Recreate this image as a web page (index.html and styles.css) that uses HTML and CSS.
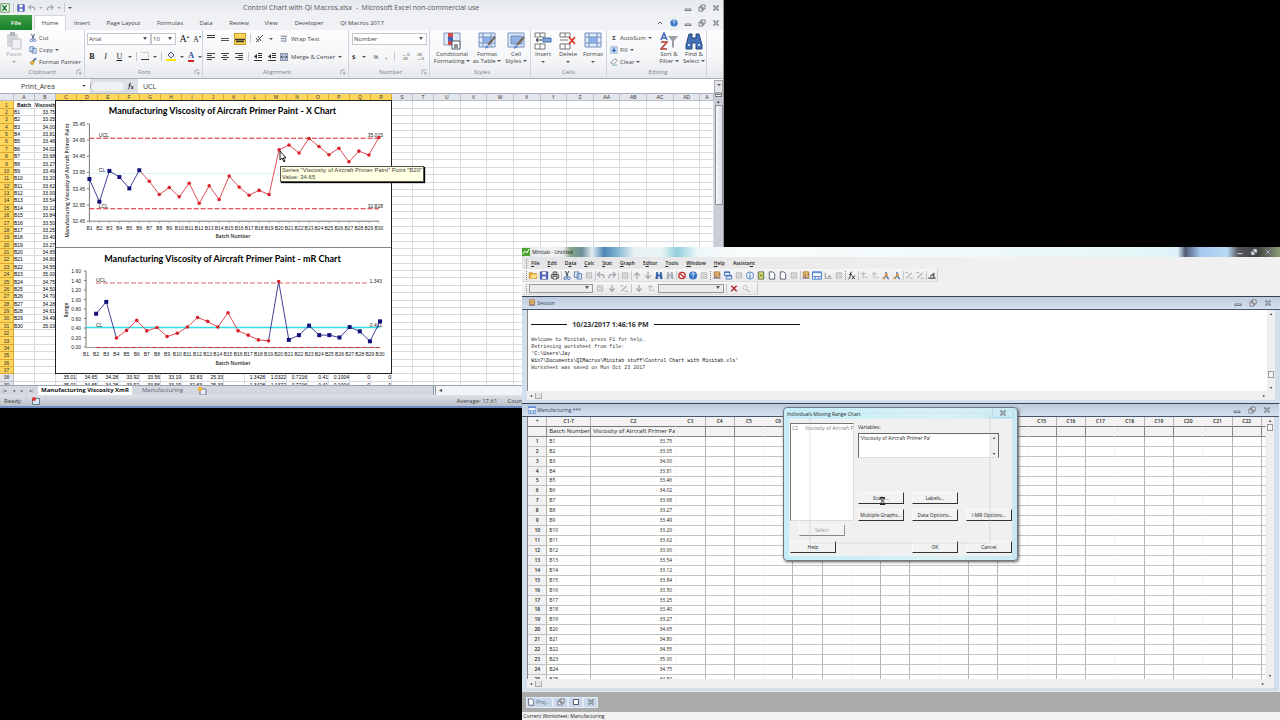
FILE: index.html
```html
<!DOCTYPE html>
<html lang="en">
<head>
<meta charset="utf-8">
<title>Control Chart with QI Macros</title>
<link rel="stylesheet" href="styles.css">
</head>
<body>
<svg class="defs" aria-hidden="true">
  <symbol id="i-excel" viewBox="0 0 12 12"><rect x="1" y="1" width="10" height="10" fill="#fff" stroke="#3c8a3c"/><path d="M3 3l5 6M8 3L3 9" stroke="#217a2b" stroke-width="2"/></symbol>
  <symbol id="i-save" viewBox="0 0 10 10"><path d="M1 1h8v8H1z" fill="#5a6cc8" stroke="#3c4a9a"/><path d="M3 1h4v3H3zM3 6h4v3H3z" fill="#fff"/></symbol>
  <symbol id="i-undo" viewBox="0 0 10 10"><path d="M2 4h4q3 0 2 4M4 1L1 4l3 3" fill="none" stroke="#a4a9b2" stroke-width="1.5"/></symbol>
  <symbol id="i-redo" viewBox="0 0 10 10"><path d="M8 4H4Q1 4 2 8M6 1l3 3-3 3" fill="none" stroke="#a4a9b2" stroke-width="1.5"/></symbol>
  <symbol id="i-cut" viewBox="0 0 10 10"><path d="M3 0l3 6M7 0L4 6" stroke="#456" stroke-width="1.2"/><circle cx="3" cy="8" r="1.5" fill="none" stroke="#3a6cb8"/><circle cx="7" cy="8" r="1.5" fill="none" stroke="#3a6cb8"/></symbol>
  <symbol id="i-copy" viewBox="0 0 10 10"><path d="M1 1h5v6H1zM4 3h5v6H4z" fill="#e8f0fb" stroke="#5579b0"/></symbol>
  <symbol id="i-brush" viewBox="0 0 10 10"><path d="M5 4L9 0" stroke="#46609c" stroke-width="2"/><path d="M1 6l4-3 2 2-3 4z" fill="#e9b63c" stroke="#8d6b18" stroke-width=".6"/></symbol>
  <symbol id="i-paste" viewBox="0 0 16 18"><path d="M1 2h11v13H1z" fill="#d4d6da"/><path d="M4 0h5v4H4z" fill="#b0b3b8"/><path d="M6 7h9v10H6z" fill="#f0f1f3" stroke="#bfc2c8"/></symbol>
  <symbol id="i-top" viewBox="0 0 10 10"><path d="M1 1.500h8M1 3.500h8" stroke="#333"/></symbol>
  <symbol id="i-mid" viewBox="0 0 10 10"><path d="M1 4.500h8M1 6.500h8" stroke="#555"/></symbol>
  <symbol id="i-bot" viewBox="0 0 10 10"><path d="M0 5.500h10M1 7.500h8" stroke="#333" stroke-width="1.300"/></symbol>
  <symbol id="i-left" viewBox="0 0 10 10"><path d="M1 1.500h8M1 3.500h5M1 5.500h8M1 7.500h5" stroke="#444"/></symbol>
  <symbol id="i-center" viewBox="0 0 10 10"><path d="M1 1.500h8M3 3.500h4M1 5.500h8M3 7.500h4" stroke="#444"/></symbol>
  <symbol id="i-right" viewBox="0 0 10 10"><path d="M1 1.500h8M4 3.500h5M1 5.500h8M4 7.500h5" stroke="#444"/></symbol>
  <symbol id="i-indent" viewBox="0 0 10 10"><path d="M5 1.500h4M5 3.500h4M5 5.500h4M1 8.500h8" stroke="#333"/><path d="M4 2v5L1 4.500z" fill="#333"/></symbol>
  <symbol id="i-angle" viewBox="0 0 10 10"><path d="M1 8l7-7M3 2l3 5M1 4l3 4" stroke="#555" fill="none"/></symbol>
  <symbol id="i-wrap" viewBox="0 0 10 10"><path d="M1 1.500h8M1 4.500h5M1 7.500h4" stroke="#555"/><path d="M7 3v5H5" fill="none" stroke="#3a6cb8"/></symbol>
  <symbol id="i-merge" viewBox="0 0 10 10"><path d="M0 1h10v8H0z" fill="#cfdcf0" stroke="#44557a"/><path d="M1 5h8M3 3L1 5l2 2M7 3l2 2-2 2" stroke="#234" fill="none"/></symbol>
  <symbol id="i-table" viewBox="0 0 18 18"><path d="M1 1h16v14H1z" fill="#dfeaf8" stroke="#7290be"/><path d="M5 5h8v6H5z" fill="#8fb1e6"/><path d="M1 5h16M1 11h16M5 1v14M13 1v14" stroke="#7290be"/></symbol>
  <symbol id="i-cond" viewBox="0 0 18 18"><path d="M1 1h16v12H1z" fill="#dfeaf8" stroke="#8b9cba"/><path d="M5 1h5v4H5zM5 9h5v4H5z" fill="#d34a4a"/><path d="M5 5h5v4H5z" fill="#3f66b8"/><path d="M9 9h8v8H9z" fill="#fff" stroke="#456"/><path d="M11 13h4M11 15h4" stroke="#223"/></symbol>
  <symbol id="i-fmt" viewBox="0 0 18 18"><use href="#i-table"/><path d="M10 13l7-8" stroke="#765" stroke-width="2"/><path d="M7 17l1-4 3 2z" fill="#4b80ca"/></symbol>
  <symbol id="i-cell" viewBox="0 0 18 18"><path d="M1 1h16v14H1z" fill="#dfeaf8" stroke="#7290be"/><path d="M4 4h11v8H4z" fill="#8fb1e6" stroke="#7290be"/><path d="M10 13l7-8" stroke="#765" stroke-width="2"/><path d="M7 17l1-4 3 2z" fill="#4b80ca"/></symbol>
  <symbol id="i-ins" viewBox="0 0 18 18"><path d="M1 1h10v4H1zM1 12h10v5H1zM6 1v4M6 12v5" fill="#fff" stroke="#777"/><path d="M9 6h8v4H9z" fill="#7ca6dc" stroke="#456fa8"/><path d="M8 8H2M4 6L2 8l2 2" stroke="#334" fill="none"/></symbol>
  <symbol id="i-del" viewBox="0 0 18 18"><path d="M1 1h10v4H1zM1 12h10v5H1zM6 1v4M6 12v5M1 8h8" fill="#fff" stroke="#777"/><path d="M10 5l6 7M16 5l-6 7" stroke="#d8362a" stroke-width="1.800"/></symbol>
  <symbol id="i-sort" viewBox="0 0 18 18"><path d="M1 8l3-7 3 7M2 6h4" stroke="#3965b1" stroke-width="1.500" fill="none"/><path d="M1 10h6l-6 7h6" fill="none" stroke="#b43a32" stroke-width="1.500"/><path d="M8 4h10l-4 5v7l-2-1V9z" fill="#9a9ea6"/></symbol>
  <symbol id="i-find" viewBox="0 0 18 18"><path d="M4 2h3v4h4V2h3l3 11v4h-6v-6H7v6H1v-4z" fill="#4370b5" stroke="#27497f"/><path d="M3 13h2M13 13h2" stroke="#c7daf4" stroke-width="2"/></symbol>
  <symbol id="i-fill" viewBox="0 0 10 10"><path d="M1 1h8v8H1z" fill="#d7e5f7" stroke="#8ca8cf"/><path d="M5 2v5M3 5l2 2 2-2" stroke="#245fb6" stroke-width="1.500" fill="none"/></symbol>
  <symbol id="i-clear" viewBox="0 0 10 10"><path d="M1 6l5-5 3 2-5 5z" fill="#fff" stroke="#64748d"/><path d="M3 9h6" stroke="#5aa"/></symbol>
  <symbol id="i-help" viewBox="0 0 10 10"><circle cx="5" cy="5" r="4.500" fill="#3474c6"/><path d="M3.500 4q0-2 1.500-2t1.500 1.500Q6.500 4.500 5 5v1M5 7v1" stroke="#fff" fill="none"/></symbol>
  <symbol id="i-min" viewBox="0 0 8 8"><path d="M1 5h6v1.500H1z" fill="#fff" stroke="#565d68" stroke-width=".8"/></symbol>
  <symbol id="i-max" viewBox="0 0 8 8"><path d="M3 1h4v4H3zM1 3h4v4H1z" fill="#fff" stroke="#565d68" stroke-width=".8"/></symbol>
  <symbol id="i-x" viewBox="0 0 8 8"><path d="M1.500 1.500l5 5M6.500 1.500l-5 5" stroke="#565d68" stroke-width="1.600"/><path d="M1.500 1.500l5 5M6.500 1.500l-5 5" stroke="#fff" stroke-width=".5"/></symbol>
  <symbol id="i-open" viewBox="0 0 10 10"><path d="M1 2h3l1 1h4v5H1z" fill="#f1b33c" stroke="#c18a25"/><path d="M2 8l2-4h6L8 8z" fill="#ffdf8a"/></symbol>
  <symbol id="i-print" viewBox="0 0 10 10"><path d="M3 1h4v3H3zM1 4h8v4H1z" fill="#bbb" stroke="#555"/><path d="M3 6h4v3H3z" fill="#fff" stroke="#555"/></symbol>
  <symbol id="i-doc" viewBox="0 0 10 10"><path d="M2 1h4l2 2v6H2z" fill="#fdfdfd" stroke="#4e5a70"/></symbol>
  <symbol id="i-gdoc" viewBox="0 0 10 10"><path d="M2 2h6v6H2z" fill="#e8e8e8" stroke="#b4b4b4"/><path d="M3 4h4M3 6h4" stroke="#c4c4c4"/></symbol>
  <symbol id="i-up" viewBox="0 0 10 10"><path d="M5 9V2M2 5l3-3 3 3" fill="none" stroke="#aaa" stroke-width="1.500"/></symbol>
  <symbol id="i-down" viewBox="0 0 10 10"><path d="M5 1v7M2 5l3 3 3-3" fill="none" stroke="#aaa" stroke-width="1.500"/></symbol>
  <symbol id="i-bino" viewBox="0 0 10 10"><path d="M2 1h2v3h2V1h2l1 8H6V6H4v3H1z" fill="#3b66a9"/></symbol>
  <symbol id="i-gbino" viewBox="0 0 10 10"><path d="M2 1h2v3h2V1h2l1 8H6V6H4v3H1z" fill="#a9b0ba"/></symbol>
  <symbol id="i-no" viewBox="0 0 10 10"><circle cx="5" cy="5" r="3.500" fill="#fff" stroke="#c62f2f" stroke-width="1.500"/><path d="M3 3l4 4" stroke="#c62f2f" stroke-width="1.500"/></symbol>
  <symbol id="i-sess" viewBox="0 0 10 10"><path d="M2 1h6v6H2z" fill="#f2c063" stroke="#a7762b"/><path d="M1 8h8M4 3v5M6 4h3" stroke="#7a6a9a"/></symbol>
  <symbol id="i-wins" viewBox="0 0 10 10"><path d="M1 1h6v4H1zM3 5h6v4H3z" fill="#dfeafb" stroke="#4571bb"/><path d="M1 1.500h6M3 5.500h6" stroke="#2c60b8"/></symbol>
  <symbol id="i-info" viewBox="0 0 10 10"><circle cx="5" cy="5" r="4" fill="#eef5ff" stroke="#467cc2"/><path d="M5 2v1M5 4v4" stroke="#225aa9"/></symbol>
  <symbol id="i-note" viewBox="0 0 10 10"><path d="M2 1h6v8H2z" fill="#f6e36a" stroke="#4b6b52"/><path d="M3 3l4 4M7 3L3 7" stroke="#3c7a4a"/></symbol>
  <symbol id="i-sheet" viewBox="0 0 10 10"><path d="M0 1h10v8H0z" fill="#fff" stroke="#3d77c9"/><path d="M0 2h10M0 6h10M3 6v3M7 6v3" stroke="#3d77c9"/></symbol>
  <symbol id="i-fx" viewBox="0 0 10 10"><path d="M1 9q2 0 2-4t2-4M2 4h3M5 5l3 4M8 5L5 9" stroke="#222" fill="none"/></symbol>
  <symbol id="i-pts" viewBox="0 0 10 10"><path d="M2 3h5M4 1v7M6 7h3" stroke="#b0b0b0"/></symbol>
  <symbol id="i-flag" viewBox="0 0 10 10"><path d="M5 1v4M2 9l3-4 3 4" stroke="#3468b3" fill="none" stroke-width="1.400"/><path d="M4 3h3v3H4zM1 7h3v2H1z" fill="#e29a3c"/></symbol>
  <symbol id="i-line" viewBox="0 0 10 10"><path d="M2 8l6-6M1 2h3M6 8h3" stroke="#aaa" stroke-width="1.200"/></symbol>
  <symbol id="i-axis" viewBox="0 0 10 10"><path d="M2 2v6h7M5 6h3" stroke="#999" fill="none" stroke-width="1.200"/></symbol>
  <symbol id="i-dark" viewBox="0 0 10 10"><path d="M1 8h8M3 6l4-3v4" stroke="#444" fill="none" stroke-width="1.300"/></symbol>
  <symbol id="i-rx" viewBox="0 0 10 10"><path d="M2 2l6 6M8 2L2 8" stroke="#b3202c" stroke-width="1.500"/></symbol>
  <symbol id="i-mag" viewBox="0 0 10 10"><circle cx="4" cy="4" r="2.500" fill="none" stroke="#c0c0c0"/><path d="M6 6l3 3" stroke="#c0c0c0" stroke-width="1.500"/></symbol>
  <symbol id="i-mtb" viewBox="0 0 8 8"><path d="M0 0h8v8H0z" fill="#4aa52f"/><path d="M1 6l2-3 2 2 2-4" stroke="#fff" fill="none"/></symbol>
  <symbol id="i-launch" viewBox="0 0 6 6"><path d="M1 5V1h4M3 3l2 2M5 3v2H3" fill="none" stroke="#9a9fa8" stroke-width=".8"/></symbol>
  <symbol id="i-cursor" viewBox="0 0 8 12"><path d="M1 0v9l2-2 2 4 1-1-2-3h3z" fill="#fff" stroke="#000" stroke-width=".9"/></symbol>
  <symbol id="i-wait" viewBox="0 0 8 10"><path d="M1 1h6M1 9h6M2 1q0 3 2 4-2 1-2 4M6 1q0 3-2 4 2 1 2 4" fill="#fff" stroke="#111"/></symbol>
</svg>

<main class="desktop">
<section class="excel" aria-label="Microsoft Excel">
  <header class="x-title">
    <div class="qat">
      <svg class="ic10"><use href="#i-excel"/></svg><i class="vr"></i>
      <svg class="ic8"><use href="#i-save"/></svg>
      <svg class="ic8"><use href="#i-undo"/></svg><i class="dd dim"></i>
      <svg class="ic8"><use href="#i-redo"/></svg><i class="dd dim"></i><i class="vr"></i><i class="dd"></i>
    </div>
    <h1 class="x-caption">Control Chart with QI Macros.xlsx&nbsp; - &nbsp;Microsoft Excel non-commercial use</h1>
    <div class="win-btns"><svg><use href="#i-min"/></svg><svg><use href="#i-max"/></svg><svg><use href="#i-x"/></svg></div>
  </header>
  <nav class="x-tabs">
    <button class="tab-file">File</button><button class="tab-home">Home</button><button class="w46">Insert</button><button class="w38b">Page Layout</button><button class="w45">Formulas</button><button class="w27">Data</button><button class="w38">Review</button><button class="w28">View</button><button class="w47">Developer</button><button class="w58">QI Macros 2017</button>
    <div class="win-btns"><svg><path d="M2 5l2-2 2 2" fill="none" stroke="#667"/></svg><svg class="ic10"><use href="#i-help"/></svg><svg><use href="#i-min"/></svg><svg><use href="#i-max"/></svg><svg><use href="#i-x"/></svg></div>
  </nav>
  <div class="ribbon">
    <div class="grp g-clip"><div class="grp-in">
      <button class="big w28 dim-t"><svg class="ic16"><use href="#i-paste"/></svg><span>Paste</span><i class="dd dim"></i></button>
      <div class="stack"><button><svg class="ic8"><use href="#i-cut"/></svg>Cut</button><button><svg class="ic8"><use href="#i-copy"/></svg>Copy <i class="dd"></i></button><button><svg class="ic8"><use href="#i-brush"/></svg>Format Painter</button></div>
    </div><div class="grp-l">Clipboard<svg class="launch"><use href="#i-launch"/></svg></div></div>
    <div class="grp g-font"><div class="grp-in rows">
      <div class="row"><select class="sel-font" aria-label="Font"><option>Arial</option></select><select class="sel-size" aria-label="Font size"><option>10</option></select><button class="serif l">A<sup>▴</sup></button><button class="serif">A<sup>▾</sup></button></div>
      <div class="row wide"><button class="serif"><b>B</b></button><button class="serif"><i class="it">I</i></button><button class="serif"><u>U</u></button><i class="dd"></i><i class="vr"></i><button><svg class="ic8"><path d="M.5.5h7v7" fill="none" stroke="#aaa" stroke-dasharray="1"/><path d="M0 7.500h8" stroke="#333"/></svg></button><i class="dd"></i><i class="vr"></i><button><svg class="ic10"><path d="M2 4l3-3 3 3-3 3z" fill="#e6eefb" stroke="#557"/><path d="M0 8h10v2H0z" fill="#ffe800"/></svg></button><i class="dd"></i><button class="fc">A</button><i class="dd"></i></div>
    </div><div class="grp-l">Font<svg class="launch"><use href="#i-launch"/></svg></div></div>
    <div class="grp g-align"><div class="grp-in">
      <div class="rows"><div class="row al"><svg class="ic10"><use href="#i-top"/></svg><svg class="ic10"><use href="#i-mid"/></svg><span class="on"><svg class="ic10"><use href="#i-bot"/></svg></span><i class="vr"></i><svg class="ic10"><use href="#i-angle"/></svg><i class="dd"></i></div>
      <div class="row al"><svg class="ic10"><use href="#i-left"/></svg><svg class="ic10"><use href="#i-center"/></svg><svg class="ic10"><use href="#i-right"/></svg><i class="vr"></i><svg class="ic10"><use href="#i-indent"/></svg><svg class="ic10"><use href="#i-indent"/></svg></div></div>
      <div class="rows"><button class="row wm"><svg class="ic8"><use href="#i-wrap"/></svg>Wrap Text</button><button class="row wm"><svg class="ic8"><use href="#i-merge"/></svg>Merge &amp; Center <i class="dd"></i></button></div>
    </div><div class="grp-l">Alignment<svg class="launch"><use href="#i-launch"/></svg></div></div>
    <div class="grp g-num"><div class="grp-in rows">
      <div class="row"><select class="sel-num" aria-label="Number format"><option>Number</option></select></div>
      <div class="row num"><b>$</b><i class="dd"></i><span>%</span><b>,</b><i class="vr"></i><small>←.0<br>.00</small><small>.00<br>→.0</small></div>
    </div><div class="grp-l">Number<svg class="launch"><use href="#i-launch"/></svg></div></div>
    <div class="grp g-sty"><div class="grp-in">
      <button class="big w38"><svg class="ic18"><use href="#i-cond"/></svg><span>Conditional<br>Formatting <i class="dd"></i></span></button><button class="big w32"><svg class="ic18"><use href="#i-fmt"/></svg><span>Format<br>as Table <i class="dd"></i></span></button><button class="big w25"><svg class="ic18"><use href="#i-cell"/></svg><span>Cell<br>Styles <i class="dd"></i></span></button>
    </div><div class="grp-l">Styles</div></div>
    <div class="grp g-cell"><div class="grp-in">
      <button class="big w25"><svg class="ic18"><use href="#i-ins"/></svg><span>Insert</span><i class="dd"></i></button><button class="big w25"><svg class="ic18"><use href="#i-del"/></svg><span>Delete</span><i class="dd"></i></button><button class="big w25"><svg class="ic18"><use href="#i-table"/></svg><span>Format</span><i class="dd"></i></button>
    </div><div class="grp-l">Cells</div></div>
    <div class="grp g-edit"><div class="grp-in">
      <div class="stack"><button><b class="sig">Σ</b>AutoSum <i class="dd"></i></button><button><svg class="ic8"><use href="#i-fill"/></svg>Fill <i class="dd"></i></button><button><svg class="ic8"><use href="#i-clear"/></svg>Clear <i class="dd"></i></button></div>
      <button class="big w25"><svg class="ic18"><use href="#i-sort"/></svg><span>Sort &amp;<br>Filter <i class="dd"></i></span></button><button class="big w25"><svg class="ic18"><use href="#i-find"/></svg><span>Find &amp;<br>Select <i class="dd"></i></span></button>
    </div><div class="grp-l">Editing</div></div>
  </div>
  <div class="formula">
    <input class="namebox" aria-label="Name box" value="Print_Area"><i class="dd"></i>
    <span class="fx"><i class="pill"></i><svg class="ic8"><use href="#i-fx"/></svg></span>
    <input class="fbar" aria-label="Formula bar" value="UCL"><span class="fexp"><i class="dd"></i></span>
  </div>
  <div class="sheet">
    <div class="cells">
      <table class="x-grid" id="xgrid"></table>
      <div class="chart">
        <svg id="chart-x" viewBox="56 101 335 147"></svg>
        <svg id="chart-r" viewBox="56 248 335 125"></svg>
        <svg class="cursor"><use href="#i-cursor"/></svg>
        <div class="tip" role="tooltip">Series "Viscosity of Aircraft Primer Paint" Point "B20"<br>Value: 34.65</div>
      </div>
    </div>
    <div class="x-vscroll"><i class="split"></i><i class="arr">▴</i><i class="thumb"></i><i class="track"></i><i class="arr">▾</i></div>
  </div>
  <div class="x-sheets">
    <span class="nav"><i>|◂</i><i>◂</i><i>▸</i><i>▸|</i></span><button class="cur">Manufacturing Viscosity XmR</button><button>Manufacturing</button><button class="newtab" aria-label="Insert worksheet"><svg class="ic10"><path d="M3 3h6v6H3z" fill="#e8eefb" stroke="#778"/><path d="M1 1h4v4H1z" fill="#f5b53c"/></svg></button>
    <span class="x-hscroll"><i class="arr">◂</i></span>
  </div>
  <footer class="x-status"><span>Ready</span><i class="vr"></i><svg class="ic8"><path d="M.5 1.500h7v6h-7z" fill="#dbe6f6" stroke="#678"/><circle cx="2" cy="2" r="2" fill="#d33"/></svg><i class="vr"></i><span class="avg">Average: 17.61</span><span class="cnt">Count: 1064</span></footer>
</section>

<section class="minitab" aria-label="Minitab">
  <header class="m-title"><svg class="ic8"><use href="#i-mtb"/></svg><span>Minitab - Untitled</span><div class="win-btns"><svg><use href="#i-min"/></svg><svg><use href="#i-max"/></svg><svg><use href="#i-x"/></svg></div></header>
  <nav class="m-menu"><i class="grip"></i><button><u>F</u>ile</button><button><u>E</u>dit</button><button>D<u>a</u>ta</button><button><u>C</u>alc</button><button><u>S</u>tat</button><button><u>G</u>raph</button><button>E<u>d</u>itor</button><button><u>T</u>ools</button><button><u>W</u>indow</button><button><u>H</u>elp</button><button>Assista<u>n</u>t</button></nav>
  <div class="m-tools" id="tools"></div>
  <div class="m-tools second"><i class="grip"></i><select class="t1" aria-label="Item"><option></option></select><svg><use href="#i-gdoc"/></svg><svg><use href="#i-down"/></svg><svg><use href="#i-line"/></svg><i class="vr"></i><svg><use href="#i-down"/></svg><svg><use href="#i-pts"/></svg><select class="t2" aria-label="Variable"><option></option></select><i class="vr"></i><svg><use href="#i-rx"/></svg><svg><use href="#i-mag"/></svg></div>
  <div class="mdi">
    <article class="child session">
      <header class="c-title"><svg class="ic8"><use href="#i-sess"/></svg><span>Session</span><div class="win-btns"><svg><use href="#i-min"/></svg><svg><use href="#i-max"/></svg><svg><use href="#i-x"/></svg></div></header>
      <div class="c-body">
        <div class="s-text"><h2><i></i>10/23/2017 1:46:16 PM<i></i></h2>
<pre><span>Welcome to Minitab, press F1 for help.</span>
<span>Retrieving worksheet from file:</span>
'C:\Users\Jay
Win7\Documents\QIMacros\Minitab stuff\Control Chart with Minitab.xls'
<span>Worksheet was saved on Mon Oct 23 2017</span></pre></div>
        <div class="vs low"><i>▴</i><b></b><i>▾</i></div>
      </div>
      <div class="hs"><i>◂</i><b></b><i class="end">▸</i></div>
    </article>
    <article class="child work">
      <header class="c-title"><svg class="ic8"><use href="#i-sheet"/></svg><span>Manufacturing ***</span><div class="win-btns"><svg><use href="#i-min"/></svg><svg><use href="#i-max"/></svg><svg><use href="#i-x"/></svg></div></header>
      <div class="c-body">
        <div class="w-clip"><table class="w-grid" id="wgrid"></table></div>
        <div class="vs"><i>▴</i><b></b><i class="end">▾</i></div>
      </div>
      <div class="hs"><i>◂</i><b></b><i class="end">▸</i></div>
    </article>
    <div class="m-dock"><button class="proj"><svg class="ic8"><use href="#i-doc"/></svg>Proj...</button><button aria-label="Restore"><svg class="ic8"><use href="#i-max"/></svg></button><button aria-label="Maximize"><svg class="ic8"><path d="M1.500 1.500h5v5h-5z" fill="#fff" stroke="#565d68"/></svg></button><button aria-label="Close"><svg class="ic8"><use href="#i-x"/></svg></button></div>
  </div>
  <footer class="m-status">Current Worksheet: Manufacturing</footer>

  <form class="dialog" aria-label="Individuals-Moving Range Chart">
    <header class="d-title"><span>Individuals-Moving Range Chart</span><button type="button" aria-label="Close"><svg class="ic8"><use href="#i-x"/></svg></button></header>
    <div class="d-body">
      <div class="d-list"><span>C2</span><span>Viscosity of Aircraft P</span></div>
      <div class="d-main">
        <label for="vars">Variables:</label>
        <div class="d-vars"><textarea id="vars">'Viscosity of Aircraft Primer Pa'</textarea><div class="vs mini"><i>▴</i><i class="end">▾</i></div></div>
        <div class="d-opts"><button type="button">Scale...</button><button type="button">Labels...</button><span></span><button type="button">Multiple Graphs...</button><button type="button">Data Options...</button><button type="button">I-MR Options...</button></div>
      </div>
      <button type="button" class="d-select" disabled>Select</button>
      <div class="d-foot"><button type="button">Help</button><span></span><button type="button">OK</button><button type="button">Cancel</button></div>
    </div>
    <div class="ghost"></div>
    <svg class="wait"><use href="#i-wait"/></svg>
  </form>
</section>
</main>
<script src="app.js"></script>
</body>
</html>
```
FILE: styles.css
```css
* { box-sizing: border-box; }
html, body { height: 100%; margin: 0; }
body { background: #000; font-family: "Open Sans", "Liberation Sans", sans-serif; font-size: 6px; color: #444; overflow: hidden; }
button, input, select, textarea { font: inherit; color: inherit; border: 0; padding: 0; margin: 0; background: none; border-radius: 0; outline: 0; }
button { white-space: nowrap; }
i { font-style: normal; }
i.it { font-style: italic; }
h1, h2, pre { margin: 0; font-weight: normal; }
.defs { position: absolute; width: 0; height: 0; }
svg { flex: none; }
.ic8 { width: 8px; height: 8px; }
.ic10 { width: 10px; height: 10px; }
.ic16 { width: 16px; height: 18px; }
.ic18 { width: 18px; height: 18px; }
.dd { display: inline-block; border: 2px solid transparent; border-top-color: #555; border-bottom: 0; vertical-align: middle; }
.dd.dim { border-top-color: #aaa; }
.vr { width: 1px; height: 9px; background: #c3c7ce; }
.win-btns { display: flex; align-items: center; gap: 6px; margin-left: auto; }
.win-btns svg { width: 8px; height: 8px; }
.desktop { position: relative; height: 100%; min-height: 720px; }

/* Excel */
.excel { position: absolute; left: 0; top: 0; width: 56.6%; height: 408px; display: flex; flex-direction: column; background: #eceef1; border-bottom: 2px solid #6f8cc0; border-right: 1px solid #999; }
.x-title { display: flex; align-items: center; height: 15px; padding: 0 3px 0 0; background: linear-gradient(#e6e9ee, #eff1f4); }
.qat { display: flex; align-items: center; gap: 3px; width: 243px; }
.x-caption { font-size: 7px; color: #555; white-space: nowrap; }
.x-tabs { display: flex; height: 15px; background: #eff1f4; padding-right: 3px; align-items: stretch; }
.x-tabs button { padding: 0; }
.tab-file { width: 32px; background: linear-gradient(#3fa045, #16802a); color: #fff; font-weight: 600; }
.tab-home { width: 32px; margin-left: 2px; }
.x-tabs .tab-home { background: #fff; border: 1px solid #d5d8dd; border-bottom: 0; }
.w46 { width: 32px; } .w38b { width: 51px; } .w45 { width: 42px; } .w27 { width: 30px; } .w38 { width: 36px; } .w28 { width: 28px; } .w47 { width: 48px; } .w58 { width: 58px; } .w32 { width: 32px; } .w25 { width: 24px; }
.ribbon { display: flex; height: 49px; background: linear-gradient(#fdfdfe, #f5f6f8 60%, #e6e9ed); border-bottom: 1px solid #a9b0bb; }
.grp { display: flex; flex-direction: column; border-right: 1px solid #d0d4da; height: 47px; padding-top: 2px; }
.grp-in { display: flex; flex: 1; gap: 1px; }
.grp-l { position: relative; height: 9px; line-height: 8px; text-align: center; color: #7d838d; }
.launch { position: absolute; right: 2px; top: 1px; width: 6px; height: 6px; }
.g-clip { width: 85px; } .g-font { width: 118px; padding-left: 2px; } .g-align { width: 146px; padding-left: 3px; } .g-num { width: 81px; padding-left: 3px; } .g-sty { width: 101px; padding-left: 4px; } .g-cell { width: 76px; } .g-edit { width: 100px; padding-left: 3px; }
.big { display: flex; flex-direction: column; align-items: center; gap: 1px; line-height: 7px; }
.big.dim-t { color: #aaa; }
.g-cell .big .dd, .g-clip .big .dd { margin-top: 2px; }
.stack { display: flex; flex-direction: column; gap: 1px; flex: 1; }
.stack button { display: flex; align-items: center; gap: 2px; height: 11px; }
.sig { width: 8px; }
.rows { display: flex; flex-direction: column; gap: 5px; }
.row { display: flex; align-items: center; gap: 2px; height: 13px; }
.row.wide { gap: 4px; } .row.al { gap: 4px; width: 73px; } .row.wm { gap: 3px; }
.serif { font: 8px "Liberation Serif", serif; color: #222; width: 10px; }
.serif.l { font-size: 10px; width: 12px; }
.serif sup { font-size: 4px; }
.fc { font: bold 8px/8px "Liberation Serif", serif; color: #2b4f9a; border-bottom: 2px solid #d22; }
.on { background: #ffd55a; border: 1px solid #c79c34; height: 12px; }
select { appearance: none; border: 1px solid #c3c8d0; background: #fff url("data:image/svg+xml,%3Csvg xmlns='http://www.w3.org/2000/svg' width='8' height='4'%3E%3Cpath d='M1 0h4L3 3z' fill='%23555'/%3E%3C/svg%3E") no-repeat right center; height: 12px; padding-left: 1px; }
.sel-font { width: 64px; } .sel-size { width: 25px; margin-left: -2px; } .sel-num { width: 75px; }
.num { gap: 7px; color: #333; } .num small { font-size: 4px; line-height: 4px; }
.formula { display: flex; align-items: center; height: 15px; background: #fff; border-bottom: 1px solid #a9b0bb; font-size: 7px; color: #333; }
.namebox { width: 82px; padding-left: 21px; height: 12px; }
.fx { display: flex; align-items: center; justify-content: space-between; height: 14px; width: 48px; margin-left: 4px; padding-right: 3px; background: #dde1e7; }
.pill { width: 34px; height: 9px; border-radius: 5px; background: #eef0f4; border-left: 1px solid #9aa0aa; }
.fbar { flex: 1; padding-left: 5px; height: 14px; }
.fexp { width: 9px; height: 13px; background: #e1e4e9; border: 1px solid #aaa; text-align: center; line-height: 8px; }
.sheet { display: flex; flex: 1; min-height: 0; }
.cells { position: relative; flex: 1; overflow: hidden; background: #fff; }
.x-grid { table-layout: fixed; width: 100%; height: 295px; border-spacing: 0; font: 5px/6px "Liberation Sans", sans-serif; color: #000; }
.x-grid td, .x-grid th { padding: 0; border-right: 1px solid #d8dbe0; border-bottom: 1px solid #d8dbe0; white-space: nowrap; overflow: hidden; font-weight: normal; }
.x-grid th { background: #e3e6ea; color: #333; border-color: #b9bec6; text-align: center; }
.x-grid th.hot { background: #ffd65c; border-color: #d9a631; }
.x-grid td.n { text-align: right; }
.x-grid td.h { text-align: center; font-weight: bold; }
.c14 { width: 14px; } .c21 { width: 21px; }
.chart { position: absolute; left: 55px; top: 6px; width: 337px; height: 274px; background: #fff; border: 1px solid #222; display: flex; flex-direction: column; }
#chart-x { height: 147px; border-bottom: 1px solid #888; } #chart-r { height: 125px; }
.chart text { font-family: "Liberation Sans", sans-serif; font-size: 5px; fill: #222; }
.chart .ttl { font-family: Lato, "Open Sans", sans-serif; font-size: 9px; font-weight: bold; fill: #000; }
.chart .m { text-anchor: middle; } .chart .e { text-anchor: end; }
.chart .b { font-family: "Open Sans", sans-serif; font-weight: 600; }
.cursor { position: absolute; left: 223px; top: 50px; width: 8px; height: 12px; }
.chart .tip { position: absolute; left: 224px; top: 65px; padding: 0 1px; background: #ffffe1; border: 1px solid #555; box-shadow: 1px 1px 1px #000; font: 6px/7px "Liberation Sans", sans-serif; color: #444; white-space: nowrap; }
.x-vscroll { width: 9px; display: flex; flex-direction: column; align-items: center; background: #c9ced6; font-size: 5px; }
.x-vscroll .split { width: 7px; height: 3px; background: #fff; border: 1px solid #777; }
.arr { line-height: 8px; }
.thumb { width: 8px; height: 100px; background: linear-gradient(90deg, #f7f8fa, #d9dde3); border: 1px solid #8d94a0; }
.track { flex: 1; }
.x-sheets { display: flex; align-items: center; height: 10px; background: #d3d8e0; border-top: 1px solid #9aa2b0; }
.nav { display: flex; justify-content: space-between; width: 38px; padding: 0 4px 0 2px; font-size: 4px; line-height: 8px; white-space: nowrap; }
.x-sheets button { color: #667; padding: 0 8px 0 20px; height: 9px; line-height: 9px; }
.x-sheets button.cur { background: #fff; color: #111; font-weight: bold; padding: 0 3px; }
.x-sheets button.cur + button { padding-left: 22px; margin-left: -12px; }
.x-sheets .newtab { padding: 0 6px; }
.x-hscroll { margin-left: auto; width: 290px; height: 9px; background: #f2f4f7; border-left: 3px double #8b93a0; padding-left: 3px; line-height: 8px; }
.x-status { display: flex; align-items: center; gap: 5px; height: 11px; padding-left: 4px; background: linear-gradient(#dfe2e7, #b9bfc9); color: #444; }
.avg { margin-left: auto; } .cnt { width: 221px; padding-left: 5px; }

/* Minitab */
.minitab { position: absolute; left: 40.8%; right: 0; top: 247px; bottom: 0; display: flex; flex-direction: column; background: #f0f0f0; color: #222; font-size: 5px; }
.m-title { display: flex; align-items: center; gap: 2px; height: 10px; padding: 0 8px 0 0; background: linear-gradient(90deg, #dfe3ea 0, #f2f2f2 30px, #e6e8ee 42px, #8aa88a 48px, #6d8f9a 60px, #e4ecf2 70px, #4c86b4 82px, #7fb2cf 95px, #e8f2f5 112px, #e8f4f6 140px, #92cfdc 155px, #ecf6f8 175px, #fafcfc 220px, #e6f7f8 80%, #dff2fa 86.500%, #505a78 87.500%, #a5c8ee 89.500%, #b5dcf6 93%, #58565c 94.500%, #3e4440 97%, #8b9a78); }
.m-menu { display: flex; align-items: center; height: 12px; gap: 8px; padding-left: 4px; font-weight: 600; background: linear-gradient(90deg, #e4e4e6, #f0f0f0 60%); }
.m-menu .grip { margin-right: -4px; }
.grip { width: 1px; height: 9px; border-left: 1px dotted #888; }
.m-tools { display: flex; align-items: center; height: 13px; gap: 1px; padding-left: 4px; width: 416px; background: linear-gradient(#f6f6f6, #e9e9e9); border-right: 1px solid #ccc; border-bottom: 1px solid #ddd; }
.m-tools svg { width: 10px; height: 9px; }
.m-tools svg.boxed { background: #cfe3fb; }
.m-tools.second { width: 236px; gap: 2px; }
.m-tools select { height: 9px; background-color: #ececec; border-color: #999; }
.t1 { width: 64px; } .t2 { width: 66px; }
.mdi { flex: 1; min-height: 0; display: flex; flex-direction: column; margin-top: 1px; background: #ababab; }
.child { display: flex; flex-direction: column; background: #d2deec; border-top: 1px solid #39424f; padding: 0 5px 3px 5px; }
.session { height: 107px; }
.work { flex: 1; min-height: 0; border-right: 1px solid #e8eef6; }
.c-title { display: flex; align-items: center; gap: 1px; height: 13px; margin: 0 -5px; padding: 0 8px 0 6px; background: linear-gradient(#bccbdf, #d4e0ee); border-bottom: 1px solid #48566b; color: #30435f; }
.c-title .win-btns { gap: 7px; }
.c-body { display: flex; flex: 1; min-height: 0; background: #fff; border-left: 1px solid #888; }
.s-text { flex: 1; padding: 10px 0 0 3px; }
.s-text h2 { display: flex; align-items: center; gap: 5px; width: 269px; font-size: 7px; line-height: 9px; font-weight: bold; color: #333; }
.s-text h2 i { width: 36px; height: 1px; background: #111; } .s-text h2 i:last-child { flex: 1; }
.s-text pre { margin-top: 8px; font: 5px/7px "Liberation Mono", monospace; color: #111; }
.s-text pre span { color: #444; }
.vs { display: flex; flex-direction: column; align-items: center; width: 8px; background: #efefef; font-size: 4px; line-height: 7px; }
.vs b { width: 6px; height: 7px; border: 1px solid #999; background: #f4f4f4; }
.vs.low b { margin-top: auto; margin-bottom: 6px; } .end { margin-top: auto; }
.hs { display: flex; align-items: center; height: 9px; background: #efefef; font-size: 4px; padding: 0 10px 0 3px; gap: 3px; }
.hs b { width: 7px; height: 6px; background: #e4e4e4; border: 1px solid #aaa; border-top: 0; }
.hs .end { margin: 0 0 0 auto; }
.w-clip { flex: 1; overflow: hidden; }
.w-grid { table-layout: fixed; width: 100%; height: 268px; border-spacing: 0; line-height: 7px; color: #222; }
.w-grid td, .w-grid th { padding: 0 2px; border-right: 1px solid #b4b4b4; border-bottom: 1px solid #c4c4c4; white-space: nowrap; overflow: hidden; }
.w-grid th, .w-grid .nm td { background: #f2f2f2; font-weight: 600; text-align: center; padding: 0 1px; }
.w-grid .nm td { border-color: #888; font-size: 6px; text-align: left; padding: 0 2px; font-weight: normal; }
.w-grid tr:first-child th { border-bottom-color: #777; }
.w-grid tr > :nth-child(3n), .w-grid .nm > :nth-child(3n) { border-right-color: #f4f4f4; }
.w-grid td.n { text-align: right; padding-right: 3px; }
.k19 { width: 19px; } .k44 { width: 44px; } .k85 { width: 85px; } .k4 { width: 4px; }
.m-dock { height: 21px; padding: 0 4px; display: flex; align-items: center; border-top: 1px solid #e8e8e8; }
.m-dock button { display: flex; align-items: center; justify-content: center; width: 15px; height: 11px; background: #c7d6e8; border: 1px solid #e4ecf5; }
.m-dock .proj { width: 27px; gap: 1px; justify-content: flex-start; color: #58687e; }
.m-status { height: 8px; line-height: 8px; background: #f1f1f1; padding-left: 1px; white-space: nowrap; }

.dialog { position: absolute; left: 34.400%; top: 160px; width: 235px; height: 154px; display: flex; flex-direction: column; padding: 0 5px 4px; border: 1px solid #707a84; border-radius: 4px; background: linear-gradient(90deg, #c5eef8, #daf1f6 70%, #c9e9f2); box-shadow: 1px 1px 3px #555; color: #222; }
.d-title { display: flex; align-items: center; justify-content: space-between; height: 11px; margin: 0 -2px; }
.d-title button { width: 22px; height: 9px; border: 1px solid #b0dce6; border-top: 0; line-height: 8px; }
.d-body { flex: 1; display: grid; grid-template: 98px 15px 1fr / 64px 1fr; column-gap: 4px; background: #f0f0f0; padding: 4px 1px 3px; }
.d-list { display: flex; gap: 7px; background: #fff; border: 1px solid #777; border-right-color: #ddd; border-bottom-color: #ddd; padding: 1px 0 1px 1px; line-height: 7px; white-space: nowrap; overflow: hidden; color: #777; }
.d-main { display: flex; flex-direction: column; }
.d-main label { line-height: 8px; margin-bottom: 2px; }
.d-vars { display: flex; width: 141px; height: 25px; background: #fff; border: 1px solid #666; border-bottom-color: #ddd; }
.d-vars textarea { flex: 1; resize: none; padding: 0 1px; line-height: 8px; overflow: hidden; }
.d-opts { display: grid; grid-template-columns: repeat(3, 46px); gap: 5px 8px; margin-top: auto; }
.dialog .d-body button { height: 12px; background: #f2f2f2; border: 1px solid #fafafa; border-right-color: #333; border-bottom-color: #333; }
.dialog .d-body .d-select { grid-column: 1; width: 46px; justify-self: center; align-self: end; color: #999; border-right-color: #999; border-bottom-color: #888; }
.d-foot { grid-column: 1 / -1; display: grid; grid-template-columns: 46px 1fr 46px 46px; column-gap: 8px; align-items: end; }
.ghost { position: absolute; left: 25px; right: 26px; top: 4px; bottom: 16px; border: 2px solid rgba(190, 190, 190, .2); border-top-color: rgba(190, 190, 190, .1); pointer-events: none; }
.wait { position: absolute; left: 95px; top: 88px; width: 7px; height: 10px; }
```
FILE: app.js
```js
const data = [33.75, 33.05, 34.00, 33.81, 33.46, 34.02, 33.68, 33.27, 33.49, 33.20, 33.62, 33.00, 33.54, 33.12, 33.84,
  33.50, 33.25, 33.40, 33.27, 34.65, 34.80, 34.55, 35.00, 34.75, 34.50, 34.70, 34.28, 34.61, 34.49, 35.03];
const limits = ['35.01', '34.65', '34.28', '33.92', '33.56', '33.19', '32.83', '25.33', '', '1.3428', '1.0322', '0.7216', '0.41', '0.1004', '0', '0'];
const cols = [...'ABCDEFGHIJKLMNOPQRSTUVWXYZ', 'AA', 'AB', 'AC', 'AD', 'A'];

/* Excel cells */
let html = '<colgroup><col class="c14">' + cols.map((c, i) => i < 20 ? '<col class="c21">' : i === 30 ? '<col class="c14">' : '<col>').join('') + '</colgroup>';
html += '<tr><th></th>' + cols.map((c, i) => `<th class="${i > 1 && i < 18 ? 'hot' : ''}">${c}</th>`).join('') + '</tr>';
for (let r = 1; r <= 39; r++) {
  html += `<tr><th class="${r < 38 ? 'hot' : ''}">${r}</th>` + cols.map((c, i) => {
    if (r === 1) return i === 0 ? '<td class="h">Batch</td>' : i === 1 ? '<td class="h">Viscosity</td>' : '<td></td>';
    if (r <= 31 && i === 0) return `<td>B${r - 1}</td>`;
    if (r <= 31 && i === 1) return `<td class="n">${data[r - 2].toFixed(2)}</td>`;
    if (r >= 38 && i > 1 && i < 18) return `<td class="n">${limits[i - 2]}</td>`;
    return '<td></td>';
  }).join('') + '</tr>';
}
document.getElementById('xgrid').innerHTML = html;

/* Minitab worksheet */
html = '<colgroup><col class="k19"><col class="k44"><col class="k85">' + '<col>'.repeat(20) + '<col class="k4"></colgroup>';
html += '<tr><th>+</th><th>C1-T</th>' + Array.from({ length: 21 }, (_, i) => `<th>C${i + 2}</th>`).join('') + '<th></th></tr>';
html += '<tr class="nm"><td></td><td>Batch Number</td><td>Viscosity of Aircraft Primer Pa</td>' + '<td></td>'.repeat(21) + '</tr>';
for (let r = 1; r <= 25; r++) {
  html += `<tr><th>${r}</th><td>B${r}</td><td class="n">${data[r - 1].toFixed(2)}</td>` + '<td></td>'.repeat(21) + '</tr>';
}
document.getElementById('wgrid').innerHTML = html;

/* Charts */
const RED = '#d8202a', NAVY = '#12127a';
const line = (x1, y1, x2, y2, c, extra = '') => `<path d="M${x1} ${y1}L${x2} ${y2}" stroke="${c}" fill="none" ${extra}/>`;
const text = (x, y, s, cls = '') => `<text x="${x}" y="${y}" class="${cls}">${s}</text>`;
function plot(pts, color, square) {
  let s = '';
  for (let i = 1; i < pts.length; i++) s += line(...pts[i - 1], ...pts[i], color(i), 'stroke-width="0.8"');
  pts.forEach(([x, y], i) => {
    s += square(i) ? `<rect x="${x - 2}" y="${y - 2}" width="4" height="4" fill="${NAVY}"/>` : `<circle cx="${x}" cy="${y}" r="1.8" fill="${RED}"/>`;
  });
  return s;
}
const Y = v => 222 - (v - 32.45) / 3 * 98, X = i => 88.5 + i * 10.05;
let s = text(222.5, 114.5, 'Manufacturing Viscosity of Aircraft Primer Paint - X Chart', 'ttl m');
s += line(88.5, 124, 88.5, 222, '#777') + line(88.5, 222, 380, 222, '#777');
for (let v = 0; v < 7; v++) s += text(84, Y(32.45 + v / 2) + 2, (32.45 + v / 2).toFixed(2), 'e') + line(86, Y(32.45 + v / 2), 88, Y(32.45 + v / 2), '#777');
data.forEach((d, i) => { s += text(X(i), 231, 'B' + (i + 1), 'm') + line(X(i), 222, X(i), 224, '#777', 'stroke-width=".6"'); });
s += line(88.5, 174, 380, 174, '#d5f4f2') + line(88.5, 138.5, 380, 138.5, RED, 'stroke-dasharray="5 2"') + line(88.5, 209.5, 380, 209.5, RED, 'stroke-dasharray="5 2"');
s += text(98, 137, 'UCL') + text(98, 173, 'CL') + text(98, 208.5, 'LCL') + text(384, 137, '35.015', 'e') + text(384, 208.5, '32.828', 'e');
s += text(233, 239, 'Batch Number', 'm b');
s += '<text class="m b" transform="translate(68 181) rotate(-90)">Manufacturing Viscosity of Aircraft Primer Paint</text>';
s += plot(data.map((d, i) => [X(i), Y(d)]), i => i < 6 ? NAVY : RED, i => i < 6);
document.getElementById('chart-x').innerHTML = s;

const R = v => 347 - v / 1.6 * 76, XR = i => 86 + i * 10.14;
const mr = data.slice(1).map((d, i) => Math.abs(d - data[i]));
s = text(222.5, 261.5, 'Manufacturing Viscosity of Aircraft Primer Paint - mR Chart', 'ttl m');
s += line(86, 271, 86, 347, '#777');
for (let v = 0; v <= 8; v++) s += text(81, R(v / 5) + 2, (v / 5).toFixed(2), 'e') + line(84, R(v / 5), 86, R(v / 5), '#777');
data.forEach((d, i) => { s += text(XR(i), 356, 'B' + (i + 1), 'm'); });
s += line(86, 347.5, 380, 347.5, '#999') + line(96, 347.5, 380, 347.5, '#c43a3a', 'stroke-dasharray="5 2"') + line(96, 283, 368, 283, '#d66', 'stroke-dasharray="5 2"') + line(86, 327.5, 380, 327.5, '#34dfe4', 'stroke-width="1.4"');
s += text(96, 282, 'UCL') + text(96, 326.500, 'CL') + text(382, 283, '1.343', 'e') + text(382, 327, '0.411', 'e');
s += text(233, 364.5, 'Batch Number', 'm b') + '<text class="m b" transform="translate(68 310) rotate(-90)">Range</text>';
s += plot(mr.map((d, i) => [XR(i + 1), R(d)]), i => i < 3 || i > 17 ? NAVY : RED, i => i < 2 || i > 18);
document.getElementById('chart-r').innerHTML = s;

/* Minitab toolbar */
const icons = 'grip open save print | cut copy gdoc | undo redo | gdoc | up down bino gbino | no help gdoc grip sess wins gdoc info note doc doc gdoc | sess sheet axis gdoc grip fx | pts pts flag flag | line line | dark'.split(' ');
document.getElementById('tools').innerHTML = icons.map(n => n === '|' ? '<i class="vr"></i>' : n === 'grip' ? '<i class="grip"></i>' : `<svg class="${n === 'sheet' ? 'boxed' : ''}"><use href="#i-${n}"/></svg>`).join('');
```
